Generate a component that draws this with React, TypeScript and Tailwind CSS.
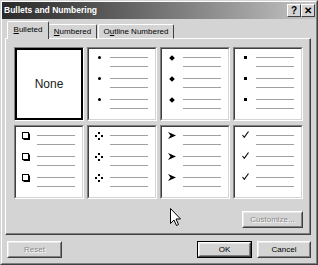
import type { ReactNode } from 'react'

const font = { fontFamily: '"Liberation Sans", Arial, sans-serif' }

type BulletKind = 'dot' | 'diamond' | 'square' | 'box' | 'star' | 'arrow' | 'check'

function Bullet({ kind }: { kind: BulletKind }) {
  switch (kind) {
    case 'dot':
      return <div className="w-[3px] h-[3px] rounded-full bg-black shrink-0" />
    case 'diamond':
      return <div className="w-[4px] h-[4px] rotate-45 bg-black shrink-0" />
    case 'square':
      return <div className="w-[3px] h-[3px] bg-black shrink-0" />
    case 'box':
      return (
        <svg width="8" height="8" viewBox="0 0 8 8" className="shrink-0">
          <rect x="0.5" y="0.5" width="6" height="6" fill="#fff" stroke="#000" />
          <path d="M7.5 1.5v6.5M1.5 7.5h6.5" stroke="#000" />
        </svg>
      )
    case 'star':
      return (
        <svg width="8" height="8" viewBox="0 0 8 8" className="shrink-0">
          <rect x="3" y="0" width="2" height="2" fill="#000" />
          <rect x="0" y="3" width="2" height="2" fill="#000" />
          <rect x="6" y="3" width="2" height="2" fill="#000" />
          <rect x="3" y="6" width="2" height="2" fill="#000" />
        </svg>
      )
    case 'arrow':
      return (
        <svg width="8" height="7" viewBox="0 0 8 7" className="shrink-0">
          <path d="M0 0L8 3.5L0 7L2.5 3.5Z" fill="#000" />
        </svg>
      )
    case 'check':
      return (
        <svg width="7" height="7" viewBox="0 0 7 7" className="shrink-0 -translate-y-[1px]">
          <path d="M0.5 4L2.3 6.3L6.5 0.5" fill="none" stroke="#000" strokeWidth="1.1" />
        </svg>
      )
  }
}

function Cell({ children, selected }: { children: ReactNode; selected?: boolean }) {
  return (
    <div className="h-[74px] border border-t-[#808080] border-l-[#808080] border-r-white border-b-white">
      <div
        className={
          selected
            ? 'h-full border-2 border-black bg-white'
            : 'h-full border border-t-[#404040] border-l-[#404040] border-r-[#d4d4d4] border-b-[#d4d4d4] bg-white'
        }
      >
        {children}
      </div>
    </div>
  )
}

function BulletList({ kind }: { kind: BulletKind }) {
  return (
    <div className="flex flex-col gap-[11px] pt-[8px]">
      {[0, 1, 2].map((i) => (
        <div key={i} className="flex items-start">
          <div className="w-[20px] h-px flex items-center justify-center">
            <Bullet kind={kind} />
          </div>
          <div className="flex flex-col gap-[8px] ml-[1px]">
            <div className="h-px w-[38px] bg-[#a0a0a0]" />
            <div className="h-px w-[38px] bg-[#a0a0a0]" />
          </div>
        </div>
      ))}
    </div>
  )
}

function Button({ label, disabled, isDefault, className }: { label: ReactNode; disabled?: boolean; isDefault?: boolean; className?: string }) {
  return (
    <div className={`h-[17px] ${isDefault ? 'border border-black' : ''} ${className ?? ''}`}>
      <div className="h-full border border-t-white border-l-white border-r-[#404040] border-b-[#404040]">
        <div
          className={`h-full flex items-center justify-center border border-t-[#e8e8e8] border-l-[#e8e8e8] border-r-[#808080] border-b-[#808080] text-[8px] ${
            disabled ? 'text-[#8a8a8a] [text-shadow:1px_1px_0_#fff]' : 'text-black'
          }`}
        >
          {label}
        </div>
      </div>
    </div>
  )
}

function TitleButton({ children }: { children: ReactNode }) {
  return (
    <div className="w-[14px] h-[13px] bg-[#d4d4d4] border border-t-white border-l-white border-r-[#404040] border-b-[#404040] flex items-center justify-center text-[10px] font-bold leading-none text-black">
      {children}
    </div>
  )
}

export default function App() {
  const bullets: BulletKind[] = ['dot', 'diamond', 'square', 'box', 'star', 'arrow', 'check']

  return (
    <div style={font} className="w-[318px] h-[265px] bg-[#d4d4d4] border border-t-[#d4d4d4] border-l-[#d4d4d4] border-r-[#404040] border-b-[#404040] overflow-hidden relative">
      <div className="h-full border border-t-white border-l-white border-r-[#808080] border-b-[#808080] flex flex-col">
        {/* title bar */}
        <div className="h-[17px] bg-gradient-to-r from-[#2a2a2a] to-[#c6c6c6] flex items-center pl-[2px] pr-[1px]">
          <span className="text-[8.5px] font-bold text-white leading-none">Bullets and Numbering</span>
          <div className="ml-auto flex">
            <TitleButton>?</TitleButton>
            <TitleButton>✕</TitleButton>
          </div>
        </div>

        <div className="pl-[3px] pr-[5px] flex flex-col">
          {/* tabs */}
          <div className="flex items-end mt-[2px] h-[18px] text-[8px] text-black relative z-10 -mb-px">
            <div className="ml-[2px] w-[42px] h-[18px] bg-[#d4d4d4] border-t border-l border-t-white border-l-white border-r border-r-[#404040] rounded-t-[2px] flex items-center justify-center pb-[1px]">
              <span>
                <span className="underline">B</span>ulleted
              </span>
            </div>
            <div className="w-[48px] h-[15px] border-t border-t-white border-r border-r-[#404040] rounded-t-[2px] flex items-center justify-center border-b border-b-white">
              <span>
                <span className="underline">N</span>umbered
              </span>
            </div>
            <div className="ml-[1px] w-[76px] h-[15px] border-t border-l border-t-white border-l-white border-r border-r-[#404040] rounded-t-[2px] flex items-center justify-center border-b border-b-white">
              <span>
                O<span className="underline">u</span>tline Numbered
              </span>
            </div>
          </div>

          {/* panel */}
          <div className="h-[197px] border border-t-white border-l-white border-r-[#404040] border-b-[#404040]">
            <div className="h-full border-r border-b border-r-[#808080] border-b-[#808080] pt-[8px] pl-[8px] pr-[6px] flex flex-col">
              <div className="grid grid-cols-[70px_70px_70px_70px] grid-rows-[74px_74px] gap-x-[3px] gap-y-[4px]">
                <Cell selected>
                  <div className="h-full flex items-center justify-center text-[12px] text-[#202020]">None</div>
                </Cell>
                {bullets.map((b) => (
                  <Cell key={b}>
                    <BulletList kind={b} />
                  </Cell>
                ))}
              </div>
              <div className="flex justify-end mt-[12px]">
                <Button label="Customize..." disabled className="w-[61px]" />
              </div>
            </div>
          </div>

          {/* bottom buttons */}
          <div className="flex mt-[6px]">
            <Button label="Reset" disabled className="ml-[2px] w-[55px]" />
            <Button label="OK" isDefault className="ml-auto w-[55px]" />
            <Button label="Cancel" className="ml-[5px] w-[54px]" />
          </div>
        </div>
      </div>

      {/* mouse cursor */}
      <svg width="12" height="19" viewBox="0 0 12 19" className="absolute left-[169px] top-[207px]">
        <path d="M0.5 0.5L0.5 15.5L4 12L6.5 17.5L8.5 16.5L6 11L10.5 11Z" fill="#fff" stroke="#000" strokeWidth="1" />
      </svg>
    </div>
  )
}
